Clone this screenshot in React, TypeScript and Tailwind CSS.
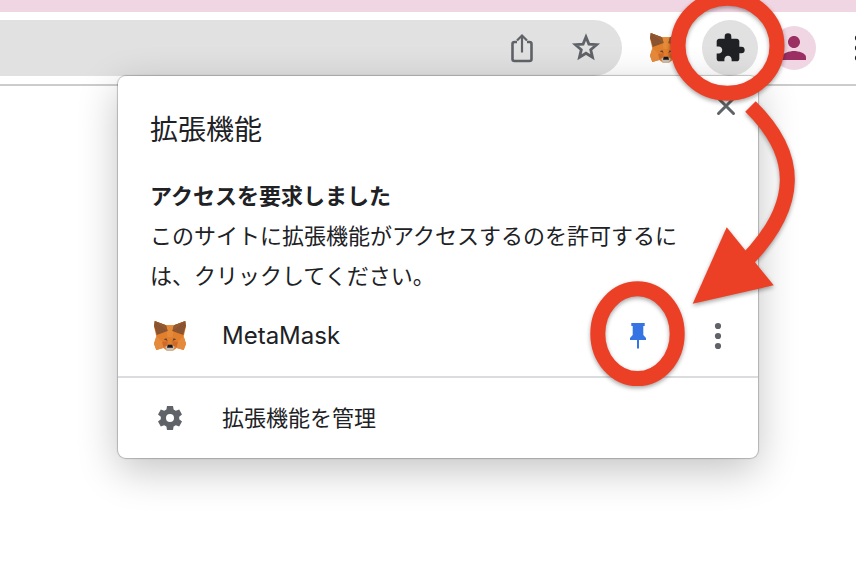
import React from 'react';
import { MdExtension, MdPerson } from 'react-icons/md';

const FoxIcon: React.FC = () => (
  <svg viewBox="0 0 96 90" className="h-[30px] w-8" aria-hidden="true">
    <path d="M2 0 36 13H60L94 0 96 16 91 38 89 46 96 68 89 87 68 81 57 89H39L28 81 7 87 0 68 7 46 5 38 0 16Z" fill="#e27f2c" />
    <path d="M36 13H60L56 48H40Z" fill="#e58a38" />
    <path d="M2 0 36 13 41 30 23 37 8 42 6 33 0 14Z" fill="#8a5430" />
    <path d="M94 0 60 13 55 30 73 37 88 42 90 33 96 14Z" fill="#8a5430" />
    <path d="M2 0 41 30 36 13Z" fill="#96592d" />
    <path d="M94 0 55 30 60 13Z" fill="#96592d" />
    <path d="M0 68 7 46 26 62 28 81 7 87Z" fill="#e58a3c" />
    <path d="M96 68 89 46 70 62 68 81 89 87Z" fill="#e58a3c" />
    <path d="M24 62 42 61 38 74 28 78Z" fill="#cf6a2a" />
    <path d="M72 62 54 61 58 74 68 78Z" fill="#cf6a2a" />
    <path d="M29 55 37 52 41 60Z" fill="#5b4238" />
    <path d="M67 55 59 52 55 60Z" fill="#5b4238" />
    <path d="M34 78 40 73H56L62 78 57 89H39Z" fill="#c9bdb2" />
    <path d="M41 71H55L57 80H39Z" fill="#16181c" />
  </svg>
);

const ShareIcon: React.FC = () => (
  <svg viewBox="0 0 32 32" className="size-8" fill="none" stroke="#5f6368" strokeWidth="2.600" aria-hidden="true">
    <path d="M11 10H8.500a2 2 0 0 0-2 2v15a2 2 0 0 0 2 2h15a2 2 0 0 0 2-2V12a2 2 0 0 0-2-2H21" />
    <path d="M16 20.500V4" strokeWidth="2.200" />
    <path d="m11 8.500 5-5 5 5" strokeWidth="2.200" />
  </svg>
);

const StarIcon: React.FC = () => (
  <svg viewBox="0 0 32 32" className="size-8" fill="none" stroke="#5f6368" strokeWidth="2.800" aria-hidden="true">
    <path d="M16 5 18.900 12.100 26.600 12.700 20.700 17.700 22.500 25.200 16 21.200 9.500 25.200 11.300 17.700 5.400 12.700 13.100 12.100Z" />
  </svg>
);

const CloseIcon: React.FC = () => (
  <svg viewBox="0 0 20 20" className="size-5" stroke="#5f6368" strokeWidth="3" strokeLinecap="round" aria-hidden="true">
    <path d="m2.500 2.500 15 15M17.500 2.500l-15 15" />
  </svg>
);

const PinIcon: React.FC = () => (
  <svg viewBox="0 0 20 28" className="h-7 w-5" fill="#3574e2" aria-hidden="true">
    <path d="M3.300 1H16.700V4H15.300V13L18 16V18H11V26L10 27 9 26V18H2V16L4.700 13V4H3.300Z" />
  </svg>
);

const GearIcon: React.FC = () => (
  <svg viewBox="0 0 24 24" className="size-6" fill="#5f6368" fillRule="evenodd" aria-hidden="true">
    <path d="M9 0H15L15.600 3.500 17.800 4.800 21.200 3.500 24 8.500 21.200 10.700V13.300L24 15.500 21.200 20.500 17.800 19.200 15.600 20.500 15 24H9L8.400 20.500 6.200 19.200 2.800 20.500 0 15.500 2.800 13.300V10.700L0 8.500 2.800 3.500 6.200 4.800 8.400 3.500ZM12 8A4 4 0 1 0 12 16 4 4 0 1 0 12 8Z" />
  </svg>
);

const DotsIcon: React.FC<{ color: string }> = ({ color }) => (
  <svg viewBox="0 0 8 28" className="h-7 w-2" fill={color} aria-hidden="true">
    <circle cx="4" cy="4" r="3.100" />
    <circle cx="4" cy="14" r="3.100" />
    <circle cx="4" cy="24" r="3.100" />
  </svg>
);

const iconButton = 'flex size-14 shrink-0 items-center justify-center rounded-full';

const Toolbar: React.FC = () => (
  <header>
    <div className="h-3 bg-[#f0d5e2]" />
    <div className="flex items-center border-b-2 border-[#cccccc] bg-white py-2">
      <div className="flex h-14 flex-1 items-center justify-end gap-2 rounded-r-full bg-[#e1e1e1] pr-2">
        <button type="button" aria-label="共有" className={iconButton}>
          <ShareIcon />
        </button>
        <button type="button" aria-label="ブックマーク" className={iconButton}>
          <StarIcon />
        </button>
      </div>
      <div className="-mr-[30px] ml-4 flex items-center gap-2">
        <button type="button" aria-label="MetaMask" className={iconButton}>
          <FoxIcon />
        </button>
        <button type="button" aria-label="拡張機能" className={`${iconButton} bg-[#e1e1e1]`}>
          <MdExtension className="size-8 text-[#202124]" />
        </button>
        <button type="button" aria-label="プロフィール" className={iconButton}>
          <span className="flex size-11 items-center justify-center rounded-full bg-[#f0d5e2]">
            <MdPerson className="size-9 text-[#9b2f64]" />
          </span>
        </button>
        <button type="button" aria-label="メニュー" className={iconButton}>
          <DotsIcon color="#202124" />
        </button>
      </div>
    </div>
  </header>
);

const ExtensionsMenu: React.FC = () => (
  <section
    aria-labelledby="menu-title"
    className="absolute top-[76px] right-[98px] w-[640px] rounded-lg bg-white shadow-[0_0_1px_1px_rgba(0,0,0,0.22),0_12px_40px_rgba(0,0,0,0.24)]"
  >
    <div className="flex items-start justify-between pt-4 pr-4 pl-8">
      <h1 id="menu-title" className="mt-4 text-[28px] leading-11">拡張機能</h1>
      <button type="button" aria-label="閉じる" className="flex h-7 w-8 items-center justify-center">
        <CloseIcon />
      </button>
    </div>

    <div className="mt-6 px-8 text-[22px] leading-10">
      <h2 className="font-bold">アクセスを要求しました</h2>
      <p>
        このサイトに拡張機能がアクセスするのを許可するに
        <br />
        は、クリックしてください。
      </p>
    </div>

    <div className="box-content flex h-20 items-center border-b-2 border-[#dadce0]">
      <button type="button" className="flex h-full flex-1 items-center gap-8 pl-8 text-left text-2xl">
        <span className="flex w-10 justify-center">
          <FoxIcon />
        </span>
        MetaMask
      </button>
      <button type="button" aria-label="固定を解除" className="flex h-full w-20 items-center justify-center">
        <PinIcon />
      </button>
      <button type="button" aria-label="その他" className="flex h-full w-20 items-center justify-center">
        <DotsIcon color="#5f6368" />
      </button>
    </div>

    <button type="button" className="flex h-20 w-full items-center gap-8 pl-8 text-left text-[22px]">
      <span className="flex w-10 justify-center">
        <GearIcon />
      </span>
      拡張機能を管理
    </button>
  </section>
);

// Red marks that lead from the toolbar button to the pin
const Annotations: React.FC = () => (
  <svg
    viewBox="576 0 280 400"
    className="pointer-events-none absolute top-0 right-0 h-[400px] w-[280px] drop-shadow-[0_2px_2px_rgba(0,0,0,0.35)]"
    fill="none"
    stroke="#ec4026"
    strokeWidth="15"
    aria-hidden="true"
  >
    <ellipse cx="727.500" cy="45.700" rx="49.500" ry="47.500" />
    <ellipse cx="637.500" cy="333.700" rx="39.700" ry="44.900" />
    <path d="M750.500 106.500C800 155 801 205 745 262" />
    <path d="M726.700 227.300 773.700 285.300 692.700 303.700Z" fill="#ec4026" stroke="none" />
  </svg>
);

const App: React.FC = () => {
  return (
    <div className="relative min-h-screen overflow-hidden bg-white font-[Inter,'Noto_Sans_CJK_JP',sans-serif] text-[#202124]">
      <Toolbar />
      <ExtensionsMenu />
      <Annotations />
    </div>
  );
};

export default App;
